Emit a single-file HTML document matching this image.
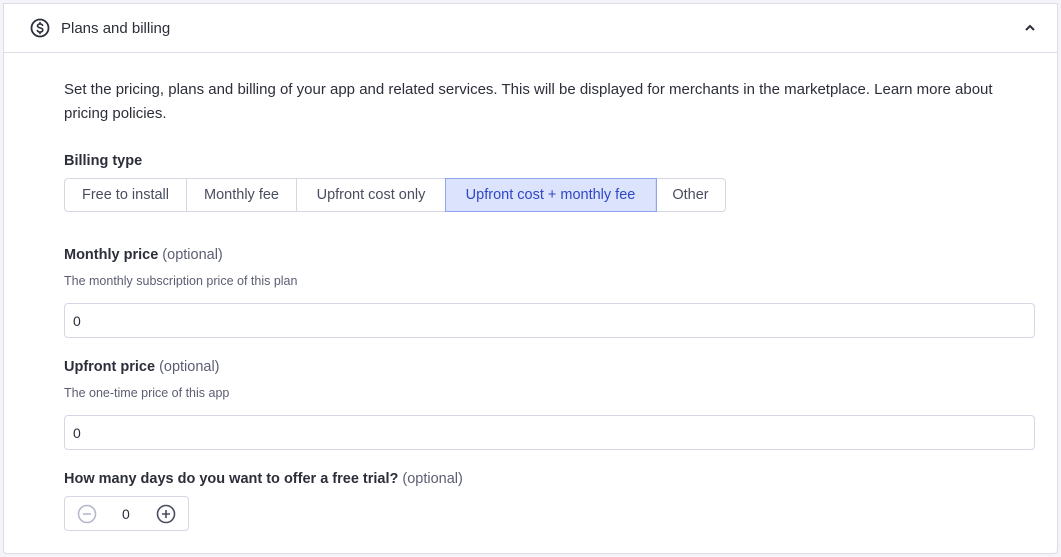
<!DOCTYPE html>
<html><head><style>
*{box-sizing:border-box;margin:0;padding:0}
body{width:1061px;height:557px;background:#f4f4f8;font-family:"Liberation Sans",sans-serif;color:#2c2e3a;position:relative;overflow:hidden}
.card{position:absolute;left:3px;top:3px;width:1055px;height:551px;background:#fff;border:1px solid #dcdde8;border-radius:0 0 4px 4px}
.hdr{position:absolute;left:0;top:0;width:100%;height:49px;border-bottom:1px solid #dcdde8}
.a{position:absolute;white-space:nowrap}
.t{font-size:15px}
.b{font-weight:bold;font-size:14.5px}
.o{font-weight:normal;color:#5b5e72}
.s{font-size:12.5px;color:#5b5e72}
.inp{position:absolute;left:60px;width:971px;height:35px;border:1px solid #d6d7e4;border-radius:4px;font-size:14px;padding:9px 0 0 8px}
.seg{position:absolute;left:60px;top:174px;height:34px;display:flex;border:1px solid #d6d7e4;border-radius:4px;font-size:14.5px;color:#4a4d60}
.seg div{padding:8px 0;text-align:center;border-right:1px solid #d6d7e4}
.seg div:last-child{border-right:none}
.seg .on{background:#dce4fd;color:#2f47c6;outline:1px solid #8fa4f0}
</style></head><body>
<div class="card">
<div class="hdr">
<svg class="a" style="left:26px;top:14px" width="20" height="20" viewBox="0 0 20 20"><circle cx="10" cy="10" r="8.5" fill="none" stroke="#2c2e3a" stroke-width="1.8"/><path d="M12.6 7.3c-.4-.8-1.3-1.3-2.6-1.3-1.5 0-2.5.8-2.5 1.9 0 2.6 5.3 1.3 5.3 4.1 0 1.2-1.1 2-2.8 2-1.3 0-2.3-.6-2.7-1.4M10 4.5v1.5M10 14v1.5" fill="none" stroke="#2c2e3a" stroke-width="1.6" stroke-linecap="round"/></svg>
<div class="a t" style="left:57px;top:16px">Plans and billing</div>
<svg class="a" style="left:1020px;top:19px" width="12" height="10" viewBox="0 0 12 10"><path d="M2 7l4-4 4 4" fill="none" stroke="#2c2e3a" stroke-width="2"/></svg>
</div>
<div class="a t" style="left:60px;top:74px;line-height:24px">Set the pricing, plans and billing of your app and related services. This will be displayed for merchants in the marketplace. Learn more about<br>pricing policies.</div>
<div class="a b" style="left:60px;top:149px">Billing type</div>
<div class="seg">
<div style="width:122px">Free to install</div>
<div style="width:110px">Monthly fee</div>
<div style="width:149px">Upfront cost only</div>
<div class="on" style="width:210px">Upfront cost + monthly fee</div>
<div style="width:69px">Other</div>
</div>
<div class="a b" style="left:60px;top:243px">Monthly price <span class="o">(optional)</span></div>
<div class="a s" style="left:60px;top:270px">The monthly subscription price of this plan</div>
<div class="inp" style="top:299px">0</div>
<div class="a b" style="left:60px;top:355px">Upfront price <span class="o">(optional)</span></div>
<div class="a s" style="left:60px;top:382px">The one-time price of this app</div>
<div class="inp" style="top:411px">0</div>
<div class="a b" style="left:60px;top:467px">How many days do you want to offer a free trial? <span class="o">(optional)</span></div>
<div class="a" style="left:60px;top:492px;width:125px;height:35px;border:1px solid #d6d7e4;border-radius:4px">
<svg class="a" style="left:12px;top:7px" width="20" height="20" viewBox="0 0 20 20"><circle cx="10" cy="10" r="8.5" fill="none" stroke="#b5b8cc" stroke-width="1.6"/><path d="M6 10h8" stroke="#b5b8cc" stroke-width="1.6"/></svg>
<div class="a" style="left:57px;top:9px;font-size:14px">0</div>
<svg class="a" style="left:91px;top:7px" width="20" height="20" viewBox="0 0 20 20"><circle cx="10" cy="10" r="8.5" fill="none" stroke="#4a4d60" stroke-width="1.6"/><path d="M6 10h8M10 6v8" stroke="#4a4d60" stroke-width="1.6"/></svg>
</div>
</div>
</body></html>
